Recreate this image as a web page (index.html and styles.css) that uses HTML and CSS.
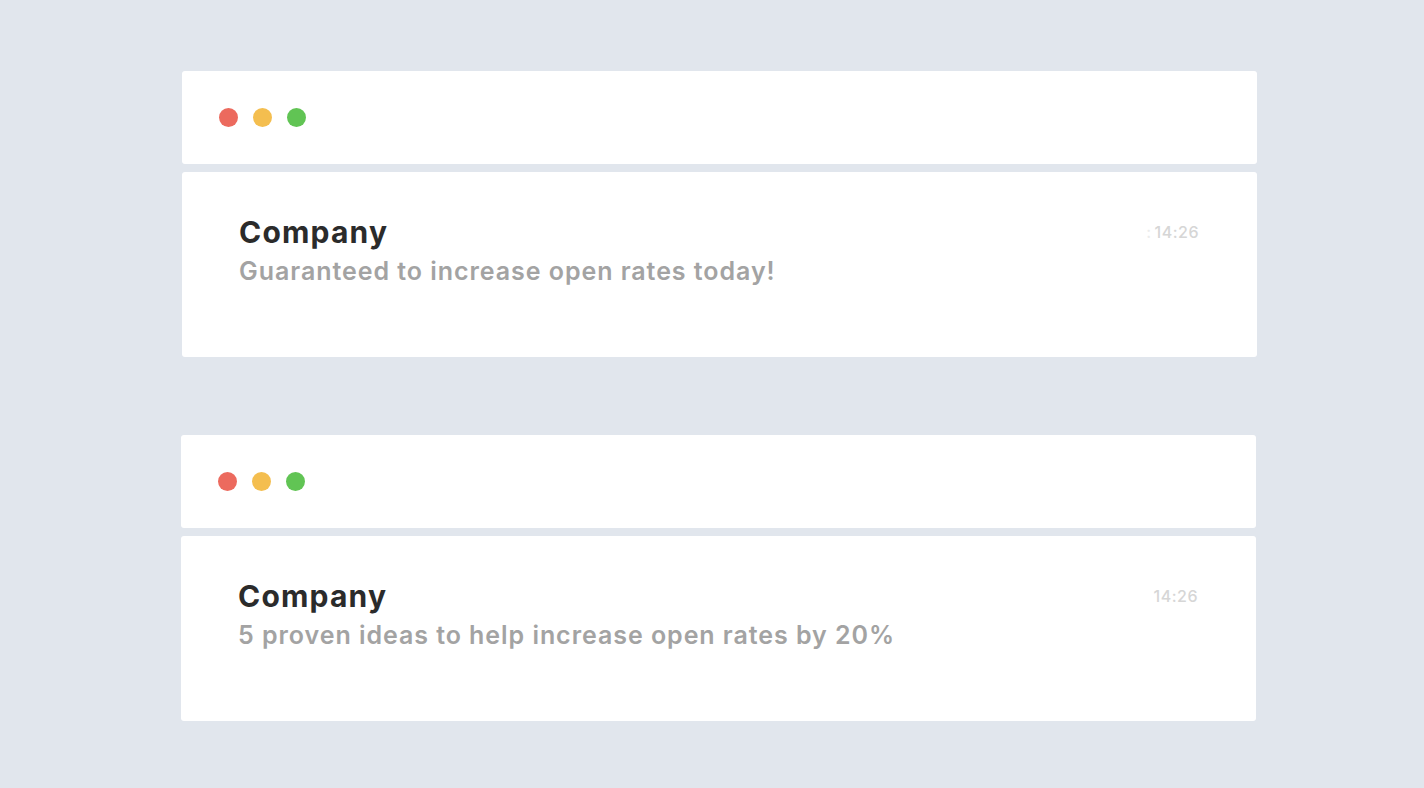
FILE: index.html
```html
<!DOCTYPE html>
<html>
<head>
<meta charset="utf-8">
<link rel="stylesheet" href="styles.css">
</head>
<body>
<div class="page">
  <div class="card">
    <div class="bar">
      <span class="dot red"></span>
      <span class="dot yellow"></span>
      <span class="dot green"></span>
    </div>
    <div class="mail">
      <div class="text">
        <div class="title">Company</div>
        <div class="subject">Guaranteed to increase open rates today!</div>
      </div>
      <div class="time"><span class="ghost">:</span>14:26</div>
    </div>
  </div>
  <div class="card second">
    <div class="bar">
      <span class="dot red"></span>
      <span class="dot yellow"></span>
      <span class="dot green"></span>
    </div>
    <div class="mail">
      <div class="text">
        <div class="title">Company</div>
        <div class="subject">5 proven ideas to help increase open rates by 20%</div>
      </div>
      <div class="time">14:26</div>
    </div>
  </div>
</div>
</body>
</html>
```
FILE: styles.css
```css
html, body {
  margin: 0;
  padding: 0;
  background: #e1e6ed;
  font-family: "Inter", "Open Sans", sans-serif;
}
.page {
  padding: 71px 0 0 182px;
  display: flex;
  flex-direction: column;
  gap: 78px;
}
.card {
  width: 1075px;
  display: flex;
  flex-direction: column;
  gap: 8px;
}
.card.second {
  margin-left: -1px;
}
.bar {
  height: 93px;
  background: #fff;
  border-radius: 3px;
  display: flex;
  align-items: center;
  gap: 15px;
  padding-left: 37px;
}
.dot {
  width: 19px;
  height: 19px;
  border-radius: 50%;
  display: block;
}
.red { background: #ec6a5e; }
.yellow { background: #f4be4f; }
.green { background: #61c454; }
.mail {
  height: 185px;
  background: #fff;
  border-radius: 3px;
  display: flex;
  justify-content: space-between;
  align-items: flex-start;
  padding: 40px 58px 0 57px;
  box-sizing: border-box;
}
.title {
  font-size: 30px;
  font-weight: 700;
  color: #2b2b2b;
  line-height: 40px;
  letter-spacing: 1.2px;
}
.subject {
  font-size: 25px;
  font-weight: 600;
  color: #a3a3a3;
  line-height: 38px;
  letter-spacing: 0.95px;
}
.time {
  font-size: 16px;
  font-weight: 500;
  color: #d6d6d6;
  padding-top: 10px;
  letter-spacing: 0.5px;
}
.ghost {
  color: #ececec;
  margin-right: 3px;
}
```
